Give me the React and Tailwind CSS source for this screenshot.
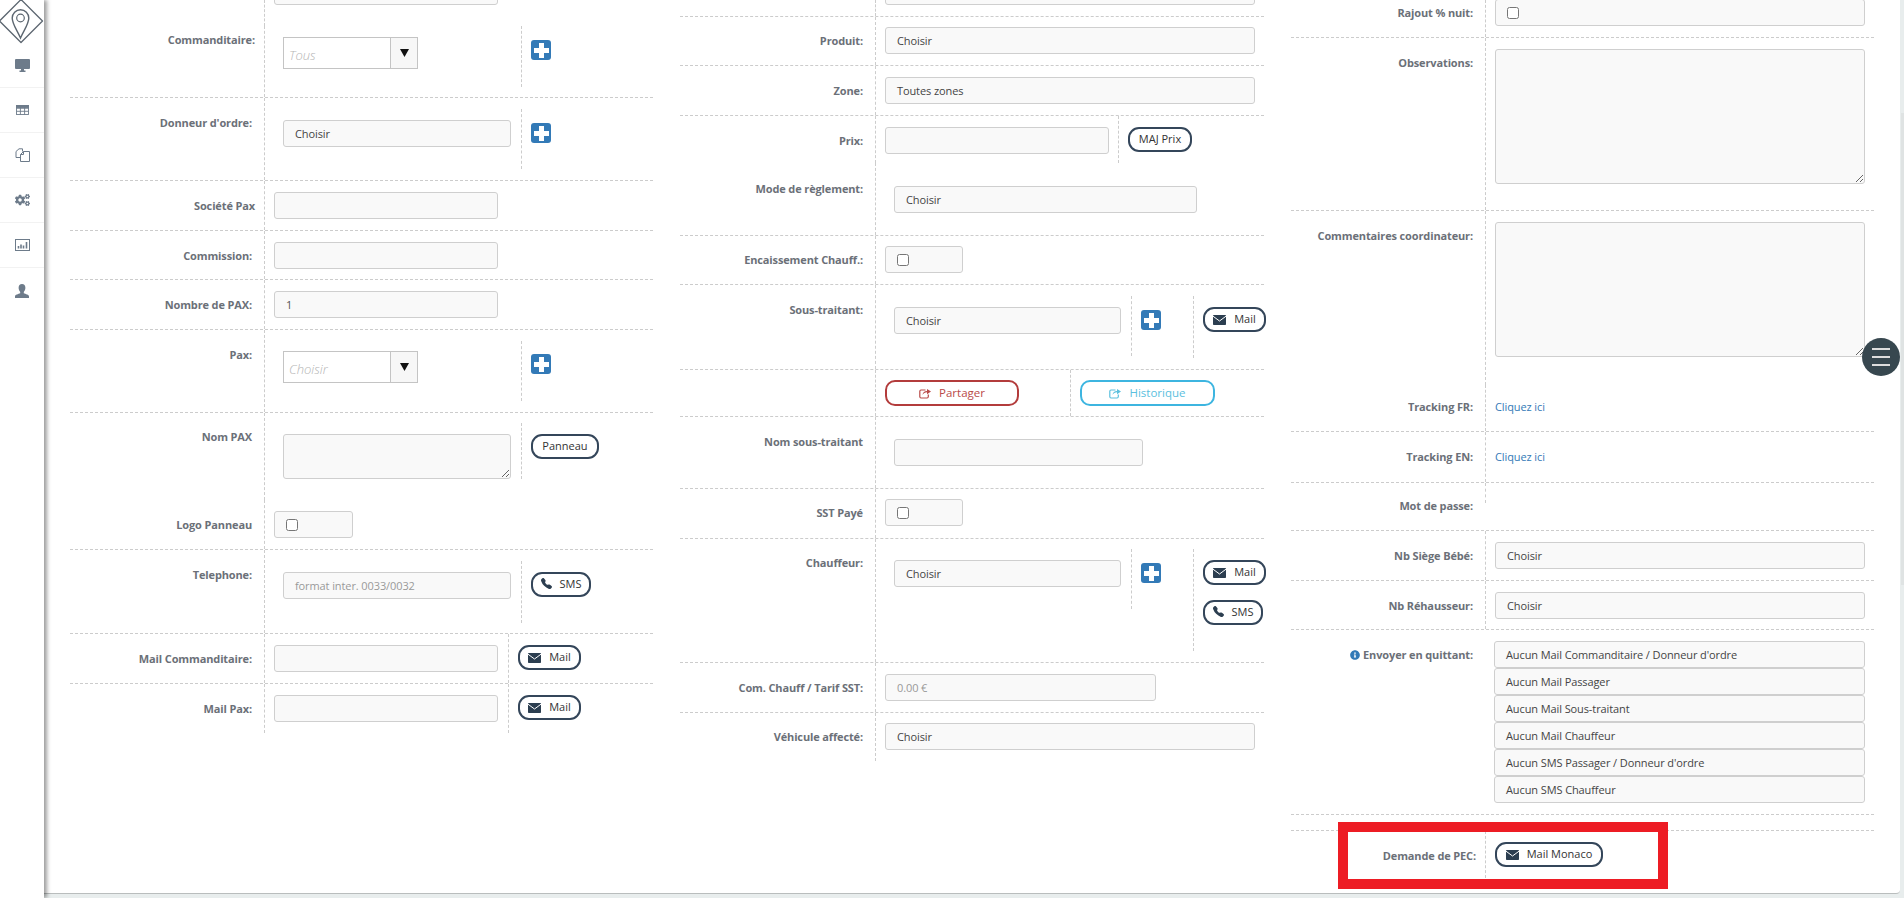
import React from "react";
import { FaCogs, FaInfoCircle } from "react-icons/fa";
import { BsTelephoneFill } from "react-icons/bs";

const Row = ({ className = "", line = true, children }) => (
  <div className={`flex ${line ? "border-t border-dashed border-[#ccc]" : ""} ${className}`}>{children}</div>
);
const Label = ({ className = "", children }) => (
  <div className={`shrink-0 text-right font-bold text-[11px] leading-4 tracking-[-0.13px] text-[#6b7078] ${className}`}>{children}</div>
);
const V = ({ className = "", children }) => (
  <div className={`flex-1 min-w-0 flex items-start border-l border-dashed border-[#ccc] ${className}`}>{children}</div>
);
const Sub = ({ className = "", children }) => (
  <div className={`shrink-0 border-l border-dashed border-[#ccc] ${className}`}>{children}</div>
);
const Box = ({ className = "", children }) => (
  <div className={`shrink-0 h-[27px] flex items-center pl-[11px] pt-[2px] bg-[#f9f9f9] border border-[#cfcfcf] rounded-[3px] text-[11px] tracking-[-0.1px] text-[#444] ${className}`}>{children}</div>
);
const Check = ({ className = "" }) => (
  <div className={`shrink-0 h-[27px] flex items-center pl-[11px] bg-[#f9f9f9] border border-[#cfcfcf] rounded-[3px] ${className}`}>
    <input type="checkbox" readOnly className="w-[12px] h-[12px] m-0" />
  </div>
);
const Area = ({ className = "" }) => (
  <textarea readOnly className={`shrink-0 block bg-[#f9f9f9] border border-[#cfcfcf] rounded-[3px] ${className}`} />
);
const Combo = ({ text, className = "" }) => (
  <div className={`shrink-0 w-[135px] h-[32px] flex bg-white border border-[#c4c4c4] ${className}`}>
    <div className="flex-1 pl-[5px] pt-[2px] italic font-light text-[13px] leading-[30px] text-[#b5b5b5]">{text}</div>
    <div className="w-[27px] bg-[#f7f7f7] border-l border-[#c4c4c4] flex items-center justify-center">
      <svg width="9" height="8" viewBox="0 0 9 8"><polygon points="0,0 9,0 4.5,8" fill="#111" /></svg>
    </div>
  </div>
);
const Plus = () => (
  <div className="w-[20px] h-[20px] rounded-[3px] bg-[#337ab7] flex items-center justify-center">
    <svg width="15" height="15" viewBox="0 0 15 15"><path d="M5 0h5v5h5v5h-5v5H5v-5H0V5h5z" fill="#fff" /></svg>
  </div>
);
const Btn = ({ className = "", children }) => (
  <div className={`h-[25px] flex items-center justify-center gap-[8px] bg-white border-2 border-[#34465a] rounded-[11px] text-[11px] text-[#333] ${className}`}>{children}</div>
);
const Envelope = () => (
  <svg width="13" height="10" viewBox="0 0 13 10" className="shrink-0">
    <rect width="13" height="10" rx="0.8" fill="#2c3e50" />
    <path d="M0 1.2 L6.5 6 L13 1.2" fill="none" stroke="#fff" strokeWidth="1" />
  </svg>
);
const Share = () => (
  <svg width="12" height="11" viewBox="0 0 12 11" fill="none" stroke="currentColor" className="shrink-0">
    <path d="M6.5 2H2A1.3 1.3 0 0 0 .8 3.2v5.6A1.3 1.3 0 0 0 2 10h6a1.3 1.3 0 0 0 1.3-1.2V6.5" strokeWidth="1.2" />
    <path d="M3.5 7 C3.8 4.5 5.5 3 8 3V1L12 3.6 8 6.2V4.3C6 4.3 4.5 5.2 3.5 7z" fill="currentColor" stroke="none" />
  </svg>
);
const MailBtn = ({ className = "" }) => (
  <Btn className={`w-[63px] ${className}`}><Envelope />Mail</Btn>
);
const SmsBtn = ({ className = "" }) => (
  <Btn className={`w-[60px] ${className}`}><BsTelephoneFill className="w-[11px] h-[11px] text-[#2c3e50] -mt-[2px]" />SMS</Btn>
);

const Item = ({ children }) => (
  <div className="h-[45px] flex items-center justify-center border-b border-[#f2f2f2] text-[#6d7b8a]">{children}</div>
);

const Sidebar = () => (
  <div className="w-[44px] shrink-0 h-full bg-white relative z-10 shadow-[3px_0_4px_rgba(0,0,0,0.38)]">
    <svg width="44" height="44" viewBox="0 0 44 44" className="block overflow-visible" fill="none" stroke="#5c6670">
      <polygon points="21,-0.5 42.5,21 21,42.5 -0.5,21" strokeWidth="1.3" strokeLinejoin="round" />
      <path d="M20.5 38 C17 30 12.2 24 12.2 18 a8.3 8.3 0 0 1 16.6 0 C28.8 24 24 30 20.5 38z" strokeWidth="1.4" />
      <circle cx="20.5" cy="18" r="3.8" strokeWidth="1.2" />
    </svg>
    <div className="h-[44px] flex items-center justify-center border-b border-[#f2f2f2]">
      <svg width="15" height="13" viewBox="0 0 15 13" fill="#6d7b8a"><path d="M1 0h13a1 1 0 0 1 1 1v8a1 1 0 0 1-1 1H9v1.5h1.5V13h-6v-1.5H6V10H1a1 1 0 0 1-1-1V1a1 1 0 0 1 1-1z" /></svg>
    </div>
    <Item>
      <svg width="13" height="10" viewBox="0 0 13 10" fill="none" stroke="#6d7b8a" strokeWidth="0.9"><rect x="0.5" y="0.5" width="12" height="9" /><path d="M0.5 3.3h12M0.5 6.3h12M4.4 0.5v9M8.6 0.5v9" /><rect x="0.5" y="0.5" width="12" height="2" fill="#6d7b8a" /></svg>
    </Item>
    <Item>
      <svg width="15" height="14" viewBox="0 0 15 14" fill="none" stroke="#6d7b8a" strokeWidth="1"><path d="M5.5 9.5H1V3.5L4 0.8h3.5v2.7" /><path d="M5.5 13.5V6.5L8.5 3.5h6v10z" /><path d="M5.5 6.5h3v-3" /></svg>
    </Item>
    <Item><FaCogs className="w-[15px] h-[14px]" /></Item>
    <Item>
      <svg width="15" height="12" viewBox="0 0 15 12" fill="none" stroke="#6d7b8a" strokeWidth="1"><rect x="0.5" y="0.5" width="14" height="11" /><path d="M3.5 9.5v-2.5M6 9.5v-4M8.5 9.5v-3M11.5 9.5v-6.5" strokeWidth="1.6" /></svg>
    </Item>
    <div className="h-[45px] flex items-center justify-center">
      <svg width="14" height="14" viewBox="0 0 14 14" fill="#6d7b8a"><path d="M7 0C9.2 0 10.4 1.6 10.4 3.8 10.4 5.6 9.6 7 8.8 7.9V9.2C10.6 10 14 10.6 14 12.4V14H0V12.4C0 10.6 3.4 10 5.2 9.2V7.9C4.4 7 3.6 5.6 3.6 3.8 3.6 1.6 4.8 0 7 0z" /></svg>
    </div>
  </div>
);

const Col1 = () => (
  <div className="w-[583px] shrink-0">
    <Row line={false} className="h-[26px]">
      <div className="w-[194px] shrink-0" />
      <V><Box className="w-[224px] ml-[9px] -mt-[22px]" /></V>
    </Row>
    <Row line={false} className="h-[71px]">
      <Label className="w-[194px] pr-[9px] pt-[6px]">Commanditaire:</Label>
      <V>
        <div className="w-[256px] shrink-0 pl-[18px] pt-[11px]"><Combo text="Tous" /></div>
        <Sub className="h-[61px] pl-[9px] pt-[14px]"><Plus /></Sub>
      </V>
    </Row>
    <Row className="h-[83px]">
      <Label className="w-[194px] pr-[12px] pt-[17px]">Donneur d'ordre:</Label>
      <V>
        <div className="w-[256px] shrink-0 pl-[18px] pt-[22px]"><Box className="w-[228px]">Choisir</Box></div>
        <Sub className="h-[60px] mt-[11px] pl-[9px] pt-[14px]"><Plus /></Sub>
      </V>
    </Row>
    <Row className="h-[50px]">
      <Label className="w-[194px] pr-[9px] pt-[17px]">Société Pax</Label>
      <V className="pt-[11px]"><Box className="w-[224px] ml-[9px]" /></V>
    </Row>
    <Row className="h-[49px]">
      <Label className="w-[194px] pr-[12px] pt-[17px]">Commission:</Label>
      <V className="pt-[11px]"><Box className="w-[224px] ml-[9px]" /></V>
    </Row>
    <Row className="h-[50px]">
      <Label className="w-[194px] pr-[12px] pt-[17px]">Nombre de PAX:</Label>
      <V className="pt-[11px]"><Box className="w-[224px] ml-[9px] text-[#555]">1</Box></V>
    </Row>
    <Row className="h-[83px]">
      <Label className="w-[194px] pr-[12px] pt-[17px]">Pax:</Label>
      <V>
        <div className="w-[256px] shrink-0 pl-[18px] pt-[21px]"><Combo text="Choisir" /></div>
        <Sub className="h-[60px] mt-[11px] pl-[9px] pt-[13px]"><Plus /></Sub>
      </V>
    </Row>
    <Row className="h-[88px]">
      <Label className="w-[194px] pr-[12px] pt-[16px]">Nom PAX</Label>
      <V>
        <div className="w-[256px] shrink-0 pl-[18px] pt-[21px]"><Area className="w-[228px] h-[45px]" /></div>
        <Sub className="h-[56px] mt-[10px] pl-[9px] pt-[11px]"><Btn className="w-[68px]">Panneau</Btn></Sub>
      </V>
    </Row>
    <Row line={false} className="h-[49px]">
      <Label className="w-[194px] pr-[12px] pt-[17px]">Logo Panneau</Label>
      <V className="pt-[11px]"><Check className="w-[79px] ml-[9px]" /></V>
    </Row>
    <Row className="h-[84px]">
      <Label className="w-[194px] pr-[12px] pt-[17px]">Telephone:</Label>
      <V>
        <div className="w-[256px] shrink-0 pl-[18px] pt-[22px]"><Box className="w-[228px] text-[#999]">format inter. 0033/0032</Box></div>
        <Sub className="h-[62px] mt-[11px] pl-[9px] pt-[11px]"><SmsBtn /></Sub>
      </V>
    </Row>
    <Row className="h-[50px]">
      <Label className="w-[194px] pr-[12px] pt-[17px]">Mail Commanditaire:</Label>
      <V>
        <div className="w-[243px] shrink-0 pl-[9px] pt-[11px]"><Box className="w-[224px]" /></div>
        <Sub className="self-stretch pl-[9px] pt-[11px]"><MailBtn /></Sub>
      </V>
    </Row>
    <Row className="h-[50px]">
      <Label className="w-[194px] pr-[12px] pt-[17px]">Mail Pax:</Label>
      <V>
        <div className="w-[243px] shrink-0 pl-[9px] pt-[11px]"><Box className="w-[224px]" /></div>
        <Sub className="self-stretch pl-[9px] pt-[11px]"><MailBtn /></Sub>
      </V>
    </Row>
  </div>
);

const Col2 = () => (
  <div className="w-[584px] shrink-0">
    <Row line={false} className="h-[16px]">
      <div className="w-[195px] shrink-0" />
      <V><Box className="w-[370px] ml-[9px] -mt-[22px]" /></V>
    </Row>
    <Row className="h-[49px]">
      <Label className="w-[195px] pr-[12px] pt-[16px]">Produit:</Label>
      <V className="pt-[10px]"><Box className="w-[370px] ml-[9px]">Choisir</Box></V>
    </Row>
    <Row className="h-[50px]">
      <Label className="w-[195px] pr-[12px] pt-[17px]">Zone:</Label>
      <V className="pt-[11px]"><Box className="w-[370px] ml-[9px]">Toutes zones</Box></V>
    </Row>
    <Row className="h-[48px]">
      <Label className="w-[195px] pr-[12px] pt-[17px]">Prix:</Label>
      <V>
        <div className="w-[242px] shrink-0 pl-[9px] pt-[11px]"><Box className="w-[224px]" /></div>
        <Sub className="self-stretch pl-[9px] pt-[11px]"><Btn className="w-[64px]">MAJ Prix</Btn></Sub>
      </V>
    </Row>
    <Row line={false} className="h-[72px]">
      <Label className="w-[195px] pr-[12px] pt-[18px]">Mode de règlement:</Label>
      <V className="pt-[23px]"><Box className="w-[303px] ml-[18px]">Choisir</Box></V>
    </Row>
    <Row className="h-[49px]">
      <Label className="w-[195px] pr-[12px] pt-[16px]">Encaissement Chauff.:</Label>
      <V className="pt-[10px]"><Check className="w-[78px] ml-[9px]" /></V>
    </Row>
    <Row className="h-[85px]">
      <Label className="w-[195px] pr-[12px] pt-[17px]">Sous-traitant:</Label>
      <V>
        <div className="w-[255px] shrink-0 pl-[18px] pt-[22px]"><Box className="w-[227px]">Choisir</Box></div>
        <Sub className="w-[62px] h-[60px] mt-[11px] pl-[9px] pt-[14px]"><Plus /></Sub>
        <Sub className="h-[62px] mt-[11px] pl-[9px] pt-[11px]"><MailBtn /></Sub>
      </V>
    </Row>
    <Row className="h-[47px]">
      <div className="w-[195px] shrink-0" />
      <V>
        <div className="w-[194px] shrink-0 pl-[9px] pt-[10px]">
          <div className="w-[134px] h-[26px] flex items-center justify-center gap-[8px] border-2 border-[#b33c3c] rounded-[10px] text-[11.5px] text-[#b94a48]"><Share />Partager</div>
        </div>
        <Sub className="self-stretch pl-[9px] pt-[10px]">
          <div className="w-[135px] h-[26px] flex items-center justify-center gap-[8px] border-2 border-[#3db5e0] rounded-[10px] text-[11.5px] text-[#5bc0de]"><Share />Historique</div>
        </Sub>
      </V>
    </Row>
    <Row className="h-[72px]">
      <Label className="w-[195px] pr-[12px] pt-[17px]">Nom sous-traitant</Label>
      <V className="pt-[22px]"><Box className="w-[249px] ml-[18px]" /></V>
    </Row>
    <Row className="h-[50px]">
      <Label className="w-[195px] pr-[12px] pt-[16px]">SST Payé</Label>
      <V className="pt-[10px]"><Check className="w-[78px] ml-[9px]" /></V>
    </Row>
    <Row className="h-[124px]">
      <Label className="w-[195px] pr-[12px] pt-[16px]">Chauffeur:</Label>
      <V>
        <div className="w-[255px] shrink-0 pl-[18px] pt-[21px]"><Box className="w-[227px]">Choisir</Box></div>
        <Sub className="w-[62px] h-[60px] mt-[10px] pl-[9px] pt-[14px]"><Plus /></Sub>
        <Sub className="h-[102px] mt-[10px] pl-[9px] pt-[11px]">
          <MailBtn />
          <SmsBtn className="mt-[15px]" />
        </Sub>
      </V>
    </Row>
    <Row className="h-[50px]">
      <Label className="w-[195px] pr-[12px] pt-[17px]">Com. Chauff / Tarif SST:</Label>
      <V className="pt-[11px]"><Box className="w-[271px] ml-[9px] text-[#999]">0.00 €</Box></V>
    </Row>
    <Row className="h-[49px]">
      <Label className="w-[195px] pr-[12px] pt-[16px]">Véhicule affecté:</Label>
      <V className="pt-[10px]"><Box className="w-[370px] ml-[9px]">Choisir</Box></V>
    </Row>
  </div>
);

const mails = [
  "Aucun Mail Commanditaire / Donneur d'ordre",
  "Aucun Mail Passager",
  "Aucun Mail Sous-traitant",
  "Aucun Mail Chauffeur",
  "Aucun SMS Passager / Donneur d'ordre",
  "Aucun SMS Chauffeur",
];

const Col3 = () => (
  <div className="w-[583px] shrink-0">
    <Row line={false} className="h-[37px]">
      <Label className="w-[194px] pr-[12px] pt-[5px]">Rajout % nuit:</Label>
      <V><Check className="w-[370px] ml-[9px] -mt-[1px]" /></V>
    </Row>
    <Row className="h-[173px]">
      <Label className="w-[194px] pr-[12px] pt-[17px]">Observations:</Label>
      <V className="pt-[11px]"><Area className="w-[370px] h-[135px] ml-[9px]" /></V>
    </Row>
    <Row className="h-[175px]">
      <Label className="w-[194px] pr-[12px] pt-[17px]">Commentaires coordinateur:</Label>
      <V className="pt-[11px]"><Area className="w-[370px] h-[135px] ml-[9px]" /></V>
    </Row>
    <Row line={false} className="h-[46px]">
      <Label className="w-[194px] pr-[12px] pt-[14px]">Tracking FR:</Label>
      <V className="pt-[14px]"><span className="ml-[9px] text-[11px] leading-4 tracking-[-0.1px] text-[#337ab7]">Cliquez ici</span></V>
    </Row>
    <Row className="h-[51px]">
      <Label className="w-[194px] pr-[12px] pt-[17px]">Tracking EN:</Label>
      <V className="pt-[17px]"><span className="ml-[9px] text-[11px] leading-4 tracking-[-0.1px] text-[#337ab7]">Cliquez ici</span></V>
    </Row>
    <Row className="h-[48px]">
      <Label className="w-[194px] pr-[12px] pt-[15px]">Mot de passe:</Label>
      <V className="self-start h-[20px]" />
    </Row>
    <Row className="h-[50px]">
      <Label className="w-[194px] pr-[12px] pt-[17px]">Nb Siège Bébé:</Label>
      <V className="pt-[11px]"><Box className="w-[370px] ml-[9px]">Choisir</Box></V>
    </Row>
    <Row className="h-[49px]">
      <Label className="w-[194px] pr-[12px] pt-[17px]">Nb Réhausseur:</Label>
      <V className="pt-[11px]"><Box className="w-[370px] ml-[9px]">Choisir</Box></V>
    </Row>
    <Row className="h-[185px]">
      <Label className="w-[194px] pr-[12px] pt-[17px]">
        <FaInfoCircle className="inline w-[10px] h-[10px] text-[#337ab7] mr-[3px] -mt-[2px]" />Envoyer en quittant:
      </Label>
      <div className="flex-1 pl-[9px] pt-[11px]">
        {mails.map((m) => (
          <Box key={m} className="w-[371px]">{m}</Box>
        ))}
      </div>
    </Row>
    <Row className="h-[16px]" />
    <Row className="h-[63px]">
      <Label className="w-[194px] pr-[9px] pt-[17px]">Demande de PEC:</Label>
      <V className="self-start h-[47px] pt-[11px]">
        <Btn className="w-[108px] ml-[9px]"><Envelope />Mail Monaco</Btn>
      </V>
    </Row>
  </div>
);

export default function App() {
  return (
    <div className="relative w-full h-[898px] overflow-hidden flex bg-[#e8eded] font-['Open_Sans',sans-serif]">
      <Sidebar />
      <div className="w-[1856px] shrink-0 h-[894px] bg-white border-b border-[#b9bdbd] rounded-br-[4px] overflow-hidden flex pl-[26px]">
        <Col1 />
        <div className="w-[27px] shrink-0" />
        <Col2 />
        <div className="w-[27px] shrink-0" />
        <Col3 />
      </div>
      <div className="w-[3px] ml-[1px] h-[472px] mt-[113px] bg-[#dfe3e3]" />
      <div className="absolute left-[1862px] top-[338px] w-[38px] h-[38px] rounded-full bg-[#37474f] flex flex-col items-center justify-center gap-[6px]">
        <div className="w-[18px] h-[2px] bg-[#dddddd]" />
        <div className="w-[18px] h-[2px] bg-[#dddddd]" />
        <div className="w-[18px] h-[2px] bg-[#dddddd]" />
      </div>
      <div className="absolute left-[1338px] top-[822px] w-[330px] h-[67px] border-[10px] border-[#ed1c24]" />
    </div>
  );
}
